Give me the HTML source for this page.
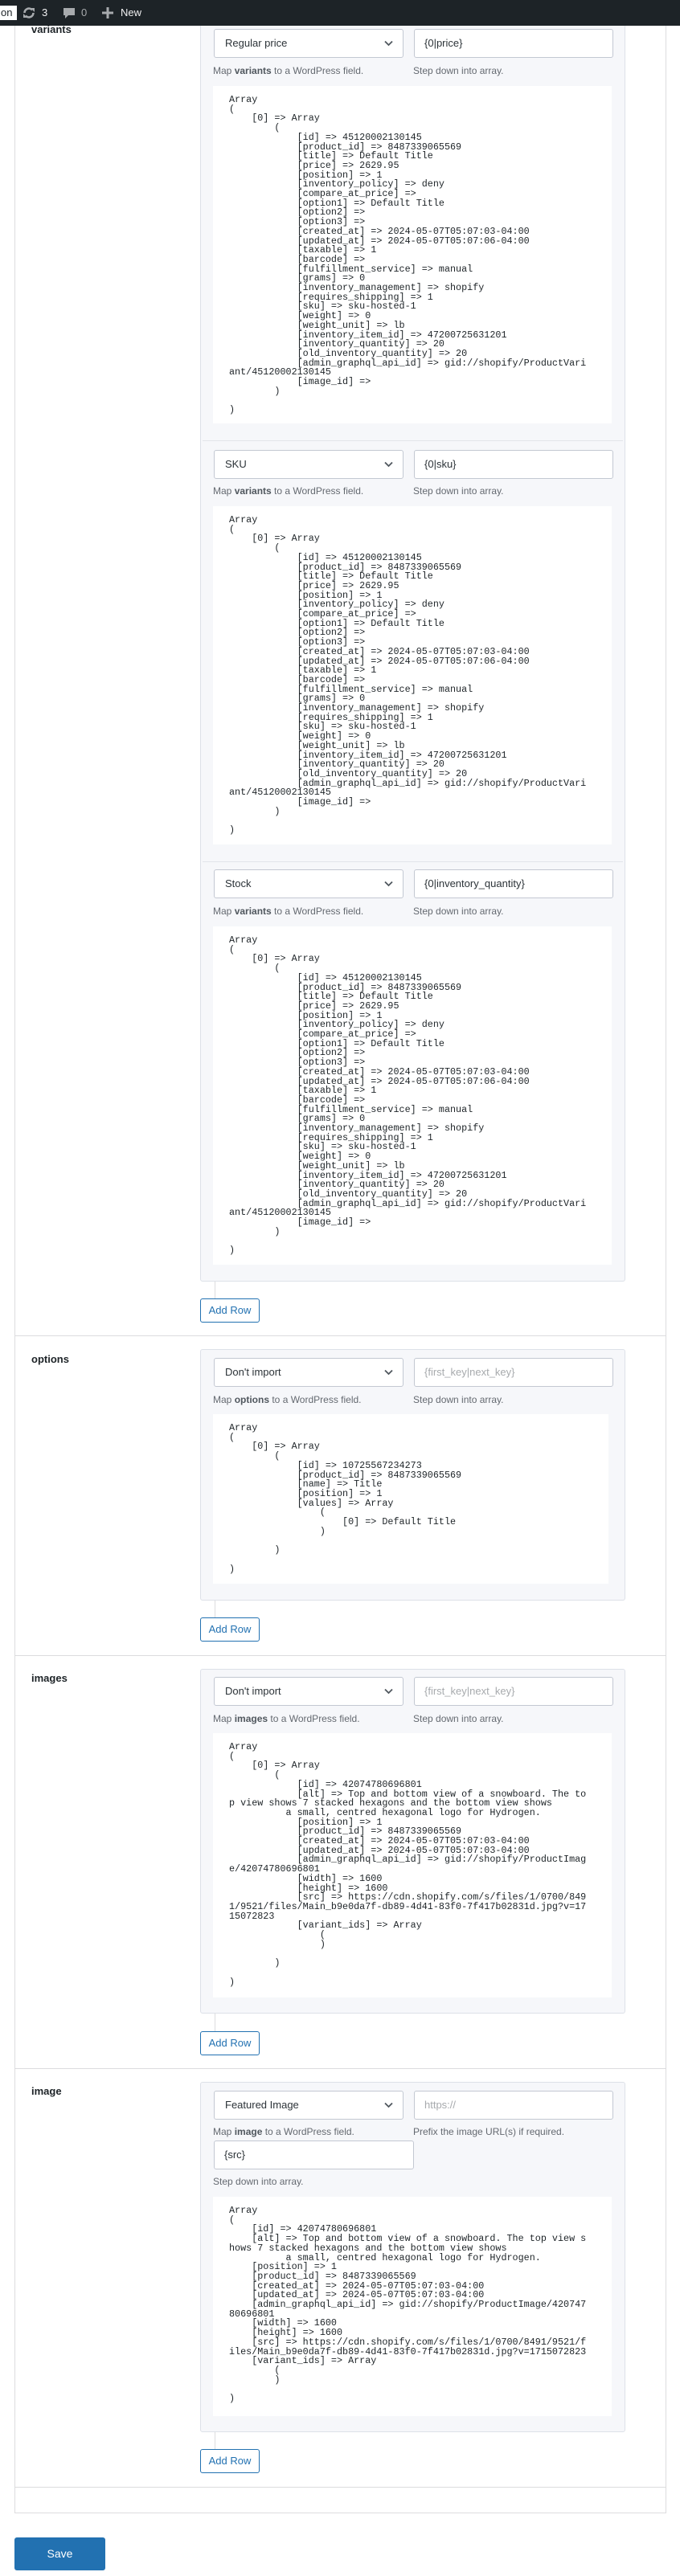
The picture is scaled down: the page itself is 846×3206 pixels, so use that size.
<!DOCTYPE html>
<html><head><meta charset="utf-8"><style>
*{box-sizing:border-box;margin:0;padding:0}
body{width:846px;height:3206px;position:relative;background:#fff;font-family:"Liberation Sans",sans-serif;color:#1d2327;overflow:hidden}
.a{position:absolute}
#bar{left:0;top:0;width:846px;height:32px;background:#1d2327;z-index:5;color:#c3c4c7;font-size:13px}
.panel{left:18px;top:-10px;width:811px;height:3138px;border:1px solid #dcdcde;border-top:none}
.hsep{left:18px;width:811px;height:1px;background:#dcdcde}
.lbl{left:39px;font-size:13px;font-weight:600;line-height:16px}
.box{left:249px;width:529px;background:#f6f7fa;border:1px solid #dde1e8;border-radius:3px}
.sel{left:266px;width:236px;height:36px;background:#fff;border:1px solid #c3c8d2;border-radius:3px;font-size:13px;line-height:34px;padding-left:13px;color:#2c3338}
.sel svg{position:absolute;right:12px;top:13px}
.inp{left:515px;width:248px;height:36px;background:#fff;border:1px solid #c3c8d2;border-radius:3px;font-size:13px;line-height:34px;padding-left:12px;color:#2c3338}
.ph{color:#a7aaad}
.help{font-size:12px;color:#646970;line-height:14px}
.help b{color:#50575e;font-weight:600}
pre{position:absolute;left:265px;width:496px;background:#fff;font-family:"Liberation Mono",monospace;font-size:11.75px;line-height:11.7px;padding:12px 0 0 20px;color:#1d2327;white-space:pre}
.isep{left:252px;width:523px;height:1px;background:#e2e5ea}
.vline{left:267px;width:1px;background:#dcdcde}
.btn{left:249px;width:74px;height:30px;border:1px solid #2271b1;border-radius:3px;background:#fff;color:#2271b1;font-size:13px;line-height:28px;text-align:center}
</style></head><body>
<div class="a panel"></div>

<!-- admin bar -->
<div class="a" id="bar">
 <div class="a" style="left:0;top:7px;width:21px;height:18px;background:#fff;color:#1d2327;font-size:13px;line-height:18px;padding-left:1px">on</div>
 <svg class="a" style="left:27px;top:7px" width="18" height="18" viewBox="0 0 18 18"><path d="M3.5 9a5.5 5.5 0 0 1 9.6-3.6" stroke="#a7aaad" stroke-width="2.6" fill="none"/><path d="M14.5 9a5.5 5.5 0 0 1-9.6 3.6" stroke="#a7aaad" stroke-width="2.6" fill="none"/><path d="M11 3h5v5z" fill="#a7aaad"/><path d="M7 15H2v-5z" fill="#a7aaad"/></svg>
 <div class="a" style="left:52px;top:8px;color:#f0f0f1;line-height:16px">3</div>
 <svg class="a" style="left:78px;top:9px" width="16" height="16" viewBox="0 0 16 16"><path d="M1 1h14v9H7l-4 4v-4H1z" fill="#a7aaad"/></svg>
 <div class="a" style="left:101px;top:8px;color:#a7aaad;line-height:16px">0</div>
 <svg class="a" style="left:127px;top:9px" width="14" height="14" viewBox="0 0 14 14"><path d="M5.5 0h3v5.5H14v3H8.5V14h-3V8.5H0v-3h5.5z" fill="#a7aaad"/></svg>
 <div class="a" style="left:150px;top:8px;color:#f0f0f1;line-height:16px">New</div>
</div>

<!-- VARIANTS -->
<div class="a lbl" style="top:29px">variants</div>
<div class="a box" style="top:20px;height:1575px"></div>
<div class="a isep" style="top:548px"></div>
<div class="a isep" style="top:1072px"></div>

<div class="a sel" style="top:36px">Regular price<svg width="11" height="8" viewBox="0 0 11 8"><path d="M1 1.5l4.5 4.5 4.5-4.5" stroke="#50575e" stroke-width="1.8" fill="none"/></svg></div>
<div class="a inp" style="top:36px">{0|price}</div>
<div class="a help" style="left:265px;top:81px">Map <b>variants</b> to a WordPress field.</div>
<div class="a help" style="left:514px;top:81px">Step down into array.</div>
<pre style="top:107px;height:420px">Array
(
    [0] => Array
        (
            [id] => 45120002130145
            [product_id] => 8487339065569
            [title] => Default Title
            [price] => 2629.95
            [position] => 1
            [inventory_policy] => deny
            [compare_at_price] => 
            [option1] => Default Title
            [option2] => 
            [option3] => 
            [created_at] => 2024-05-07T05:07:03-04:00
            [updated_at] => 2024-05-07T05:07:06-04:00
            [taxable] => 1
            [barcode] => 
            [fulfillment_service] => manual
            [grams] => 0
            [inventory_management] => shopify
            [requires_shipping] => 1
            [sku] => sku-hosted-1
            [weight] => 0
            [weight_unit] => lb
            [inventory_item_id] => 47200725631201
            [inventory_quantity] => 20
            [old_inventory_quantity] => 20
            [admin_graphql_api_id] => gid://shopify/ProductVari
ant/45120002130145
            [image_id] => 
        )

)</pre>

<div class="a sel" style="top:560px">SKU<svg width="11" height="8" viewBox="0 0 11 8"><path d="M1 1.5l4.5 4.5 4.5-4.5" stroke="#50575e" stroke-width="1.8" fill="none"/></svg></div>
<div class="a inp" style="top:560px">{0|sku}</div>
<div class="a help" style="left:265px;top:604px">Map <b>variants</b> to a WordPress field.</div>
<div class="a help" style="left:514px;top:604px">Step down into array.</div>
<pre style="top:630px;height:421px">Array
(
    [0] => Array
        (
            [id] => 45120002130145
            [product_id] => 8487339065569
            [title] => Default Title
            [price] => 2629.95
            [position] => 1
            [inventory_policy] => deny
            [compare_at_price] => 
            [option1] => Default Title
            [option2] => 
            [option3] => 
            [created_at] => 2024-05-07T05:07:03-04:00
            [updated_at] => 2024-05-07T05:07:06-04:00
            [taxable] => 1
            [barcode] => 
            [fulfillment_service] => manual
            [grams] => 0
            [inventory_management] => shopify
            [requires_shipping] => 1
            [sku] => sku-hosted-1
            [weight] => 0
            [weight_unit] => lb
            [inventory_item_id] => 47200725631201
            [inventory_quantity] => 20
            [old_inventory_quantity] => 20
            [admin_graphql_api_id] => gid://shopify/ProductVari
ant/45120002130145
            [image_id] => 
        )

)</pre>

<div class="a sel" style="top:1082px">Stock<svg width="11" height="8" viewBox="0 0 11 8"><path d="M1 1.5l4.5 4.5 4.5-4.5" stroke="#50575e" stroke-width="1.8" fill="none"/></svg></div>
<div class="a inp" style="top:1082px">{0|inventory_quantity}</div>
<div class="a help" style="left:265px;top:1127px">Map <b>variants</b> to a WordPress field.</div>
<div class="a help" style="left:514px;top:1127px">Step down into array.</div>
<pre style="top:1153px;height:421px">Array
(
    [0] => Array
        (
            [id] => 45120002130145
            [product_id] => 8487339065569
            [title] => Default Title
            [price] => 2629.95
            [position] => 1
            [inventory_policy] => deny
            [compare_at_price] => 
            [option1] => Default Title
            [option2] => 
            [option3] => 
            [created_at] => 2024-05-07T05:07:03-04:00
            [updated_at] => 2024-05-07T05:07:06-04:00
            [taxable] => 1
            [barcode] => 
            [fulfillment_service] => manual
            [grams] => 0
            [inventory_management] => shopify
            [requires_shipping] => 1
            [sku] => sku-hosted-1
            [weight] => 0
            [weight_unit] => lb
            [inventory_item_id] => 47200725631201
            [inventory_quantity] => 20
            [old_inventory_quantity] => 20
            [admin_graphql_api_id] => gid://shopify/ProductVari
ant/45120002130145
            [image_id] => 
        )

)</pre>
<div class="a vline" style="top:1595px;height:21px"></div>
<div class="a btn" style="top:1616px">Add Row</div>
<div class="a hsep" style="top:1662px"></div>

<!-- OPTIONS -->
<div class="a lbl" style="top:1684px">options</div>
<div class="a box" style="top:1679px;height:313px"></div>
<div class="a sel" style="top:1690px">Don't import<svg width="11" height="8" viewBox="0 0 11 8"><path d="M1 1.5l4.5 4.5 4.5-4.5" stroke="#50575e" stroke-width="1.8" fill="none"/></svg></div>
<div class="a inp ph" style="top:1690px">{first_key|next_key}</div>
<div class="a help" style="left:265px;top:1735px">Map <b>options</b> to a WordPress field.</div>
<div class="a help" style="left:514px;top:1735px">Step down into array.</div>
<pre style="top:1760px;height:211px;width:492px">Array
(
    [0] => Array
        (
            [id] => 10725567234273
            [product_id] => 8487339065569
            [name] => Title
            [position] => 1
            [values] => Array
                (
                    [0] => Default Title
                )

        )

)</pre>
<div class="a vline" style="top:1992px;height:21px"></div>
<div class="a btn" style="top:2013px">Add Row</div>
<div class="a hsep" style="top:2060px"></div>

<!-- IMAGES -->
<div class="a lbl" style="top:2081px">images</div>
<div class="a box" style="top:2077px;height:429px"></div>
<div class="a sel" style="top:2087px">Don't import<svg width="11" height="8" viewBox="0 0 11 8"><path d="M1 1.5l4.5 4.5 4.5-4.5" stroke="#50575e" stroke-width="1.8" fill="none"/></svg></div>
<div class="a inp ph" style="top:2087px">{first_key|next_key}</div>
<div class="a help" style="left:265px;top:2132px">Map <b>images</b> to a WordPress field.</div>
<div class="a help" style="left:514px;top:2132px">Step down into array.</div>
<pre style="top:2157px;height:329px">Array
(
    [0] => Array
        (
            [id] => 42074780696801
            [alt] => Top and bottom view of a snowboard. The to
p view shows 7 stacked hexagons and the bottom view shows
          a small, centred hexagonal logo for Hydrogen.
            [position] => 1
            [product_id] => 8487339065569
            [created_at] => 2024-05-07T05:07:03-04:00
            [updated_at] => 2024-05-07T05:07:03-04:00
            [admin_graphql_api_id] => gid://shopify/ProductImag
e/42074780696801
            [width] => 1600
            [height] => 1600
            [src] => https://cdn.shopify.com/s/files/1/0700/849
1/9521/files/Main_b9e0da7f-db89-4d41-83f0-7f417b02831d.jpg?v=17
15072823
            [variant_ids] => Array
                (
                )

        )

)</pre>
<div class="a vline" style="top:2506px;height:22px"></div>
<div class="a btn" style="top:2528px">Add Row</div>
<div class="a hsep" style="top:2574px"></div>

<!-- IMAGE -->
<div class="a lbl" style="top:2595px">image</div>
<div class="a box" style="top:2591px;height:436px"></div>
<div class="a sel" style="top:2602px">Featured Image<svg width="11" height="8" viewBox="0 0 11 8"><path d="M1 1.5l4.5 4.5 4.5-4.5" stroke="#50575e" stroke-width="1.8" fill="none"/></svg></div>
<div class="a inp ph" style="top:2602px">https://</div>
<div class="a help" style="left:265px;top:2646px">Map <b>image</b> to a WordPress field.</div>
<div class="a help" style="left:514px;top:2646px">Prefix the image URL(s) if required.</div>
<div class="a inp" style="top:2664px;left:266px;width:249px">{src}</div>
<div class="a help" style="left:265px;top:2708px">Step down into array.</div>
<pre style="top:2734px;height:273px">Array
(
    [id] => 42074780696801
    [alt] => Top and bottom view of a snowboard. The top view s
hows 7 stacked hexagons and the bottom view shows
          a small, centred hexagonal logo for Hydrogen.
    [position] => 1
    [product_id] => 8487339065569
    [created_at] => 2024-05-07T05:07:03-04:00
    [updated_at] => 2024-05-07T05:07:03-04:00
    [admin_graphql_api_id] => gid://shopify/ProductImage/420747
80696801
    [width] => 1600
    [height] => 1600
    [src] => https://cdn.shopify.com/s/files/1/0700/8491/9521/f
iles/Main_b9e0da7f-db89-4d41-83f0-7f417b02831d.jpg?v=1715072823
    [variant_ids] => Array
        (
        )

)</pre>
<div class="a vline" style="top:3027px;height:21px"></div>
<div class="a btn" style="top:3048px">Add Row</div>
<div class="a hsep" style="top:3095px"></div>

<div class="a" style="left:18px;top:3158px;width:113px;height:41px;background:#2271b1;border-radius:3px;color:#fff;font-size:14px;line-height:41px;text-align:center">Save</div>
</body></html>
